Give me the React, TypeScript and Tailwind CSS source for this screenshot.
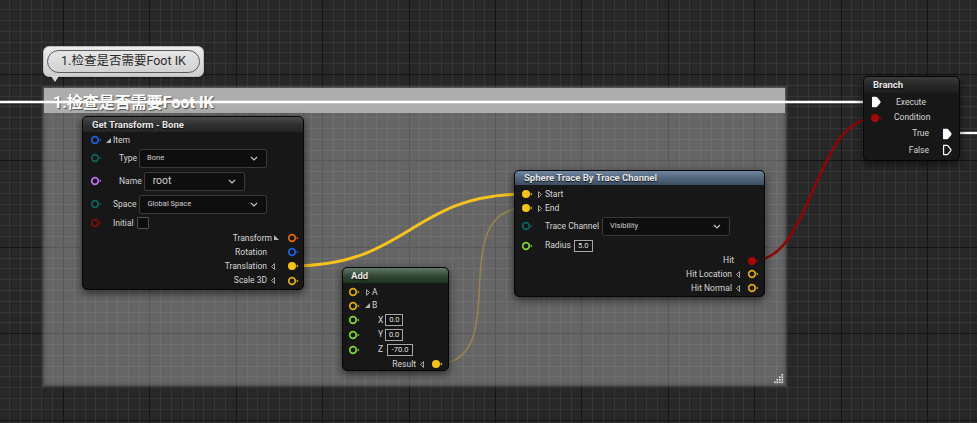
import React from "react";

type PinProps = { c: string; filled?: boolean };

function Pin({ c, filled = false }: PinProps) {
  return (
    <svg width="12" height="10" viewBox="0 0 12 10" className="shrink-0 block">
      {filled ? (
        <circle cx="5" cy="5" r="4" fill={c} />
      ) : (
        <circle cx="5" cy="5" r="3.3" fill="none" stroke={c} strokeWidth="1.7" />
      )}
      <path d="M9.7 3.4 L11.5 5 L9.7 6.6 Z" fill={c} />
    </svg>
  );
}

function Exec({ filled = false }: { filled?: boolean }) {
  return (
    <svg width="10" height="12" viewBox="0 0 10 12" className="shrink-0 block">
      <path
        d="M1.6 1.4 H4.9 Q5.5 1.4 5.9 1.9 L8.8 5.4 Q9.2 6 8.8 6.6 L5.9 10.1 Q5.5 10.6 4.9 10.6 H1.6 Z"
        fill={filled ? "#ffffff" : "none"}
        stroke="#ffffff"
        strokeWidth="1.2"
        strokeLinejoin="round"
      />
    </svg>
  );
}

function TriR() {
  return (
    <svg width="4" height="7" viewBox="0 0 4 7" className="shrink-0 block">
      <path d="M0.5 0.6 L3.5 3.5 L0.5 6.4 Z" fill="none" stroke="#b5b5b5" strokeWidth="0.9" />
    </svg>
  );
}

function TriL() {
  return (
    <svg width="4" height="7" viewBox="0 0 4 7" className="shrink-0 block">
      <path d="M3.5 0.6 L0.5 3.5 L3.5 6.4 Z" fill="none" stroke="#b5b5b5" strokeWidth="0.9" />
    </svg>
  );
}

function SplitTri() {
  return (
    <svg width="5" height="5" viewBox="0 0 5 5" className="shrink-0 block">
      <path d="M5 0 L5 5 L0 5 Z" fill="#b5b5b5" />
    </svg>
  );
}

function SplitTriL() {
  return (
    <svg width="5" height="5" viewBox="0 0 5 5" className="shrink-0 block">
      <path d="M0 0 L5 5 L0 5 Z" fill="#b5b5b5" />
    </svg>
  );
}

function Chevron() {
  return (
    <svg width="8" height="5" viewBox="0 0 8 5" className="shrink-0 block">
      <polyline points="1,1 4,4 7,1" fill="none" stroke="#c8c8c8" strokeWidth="1.1" />
    </svg>
  );
}

function Label({ children, cls = "" }: { children: React.ReactNode; cls?: string }) {
  return (
    <span className={`text-[8.5px] leading-none text-[#d6d6d6] whitespace-nowrap ${cls}`}>{children}</span>
  );
}

function Dropdown({ cls, text, textCls }: { cls: string; text: string; textCls: string }) {
  return (
    <div
      className={`h-[19px] flex items-center justify-between rounded-[2px] border border-[#3a3a3a] bg-[#0e0e0e] pr-[8px] ${cls}`}
    >
      <span className={`leading-none text-[#cfcfcf] whitespace-nowrap ${textCls}`}>{text}</span>
      <Chevron />
    </div>
  );
}

function ValueBox({ cls, text }: { cls: string; text: string }) {
  return (
    <div
      className={`h-[12px] flex items-center justify-center border border-[#a8a8a8] bg-[#121212] ${cls}`}
    >
      <span className="text-[7.5px] leading-none text-[#e0e0e0]">{text}</span>
    </div>
  );
}

function NodeBox({
  pos,
  header,
  title,
  children,
}: {
  pos: string;
  header: string;
  title: string;
  children: React.ReactNode;
}) {
  return (
    <div
      className={`absolute ${pos} flex flex-col rounded-[5px] border border-[#060606] bg-[#171717] shadow-[0_3px_8px_rgba(0,0,0,0.6)] overflow-hidden`}
    >
      <div className={`${header} flex items-center shrink-0 rounded-t-[4px]`}>
        <span className="text-[9.5px] font-bold leading-none text-[#e8e8e8] whitespace-nowrap [text-shadow:0_1px_1px_rgba(0,0,0,0.85)]">
          {title}
        </span>
      </div>
      {children}
    </div>
  );
}

function Grid() {
  const vs: { x: number; major: boolean }[] = [];
  for (let k = -5; 63 + k * 10.8 < 977; k++) {
    vs.push({ x: Math.round(63 + k * 10.8), major: ((k % 8) + 8) % 8 === 0 });
  }
  const hs: { y: number; major: boolean }[] = [];
  for (let k = -6; 74 + k * 10.8 < 423; k++) {
    hs.push({ y: Math.round(74 + k * 10.8), major: ((k % 8) + 8) % 8 === 0 });
  }
  return (
    <svg className="absolute inset-0 block" width="977" height="423" shapeRendering="crispEdges">
      <rect width="977" height="423" fill="#272727" />
      {vs.filter((v) => !v.major).map((v) => (
        <rect key={"v" + v.x} x={v.x} y={0} width={1} height={423} fill="#363636" />
      ))}
      {hs.filter((h) => !h.major).map((h) => (
        <rect key={"h" + h.y} x={0} y={h.y} width={977} height={1} fill="#363636" />
      ))}
      {vs.filter((v) => v.major).map((v) => (
        <rect key={"V" + v.x} x={v.x} y={0} width={1} height={423} fill="#151515" />
      ))}
      {hs.filter((h) => h.major).map((h) => (
        <rect key={"H" + h.y} x={0} y={h.y} width={977} height={1} fill="#151515" />
      ))}
    </svg>
  );
}

function Wires() {
  return (
    <svg className="absolute inset-0 block pointer-events-none" width="977" height="423">
      <path d="M0 102 H872" stroke="#ffffff" strokeWidth="2.3" fill="none" />
      <path d="M948 133 H977" stroke="#ffffff" strokeWidth="2.3" fill="none" />
      <path
        d="M292 266 C 410 266, 410 194, 526 194"
        stroke="#f6c31d"
        strokeWidth="3"
        fill="none"
      />
      <path
        d="M436 364 C 516 364, 442 208, 526 208"
        stroke="rgba(196,160,60,0.5)"
        strokeWidth="1.6"
        fill="none"
      />
      <path
        d="M752 261 C 813 261, 814 118, 875 118"
        stroke="#8e0606"
        strokeWidth="2.6"
        fill="none"
      />
    </svg>
  );
}

function Grip() {
  const dots: [number, number][] = [];
  for (let r = 0; r < 4; r++) {
    for (let c = 3 - r; c < 4; c++) {
      dots.push([c * 2.5, r * 2.5]);
    }
  }
  return (
    <svg width="10" height="10" viewBox="0 0 10 10" className="block">
      {dots.map(([x, y], i) => (
        <rect key={i} x={x} y={y} width="1.6" height="1.6" fill="#e6e6e6" />
      ))}
    </svg>
  );
}

export default function App() {
  const blue = "#2160d8";
  const teal = "#0c625e";
  const purple = "#c46cf0";
  const darkRed = "#860a0a";
  const orange = "#e3690e";
  const yellow = "#f6c31d";
  const yellowO = "#dcaa16";
  const green = "#82d234";
  const red = "#a80606";

  return (
    <div className="relative w-[977px] h-[423px] overflow-hidden bg-[#272727] font-[Roboto,'Noto_Sans_CJK_SC',sans-serif]">
      <Grid />

      {/* Comment box */}
      <div className="absolute left-[42px] top-[86px] w-[745px] h-[301px] flex flex-col bg-white/[0.29] border border-black/40 shadow-[inset_0_0_4px_rgba(0,0,0,0.45)]">
        <div className="mx-[1px] mt-[1px] h-[25px] shrink-0 bg-[#adadad] flex items-center pl-[9px] pt-[4px]">
          <span className="text-[16px] font-bold leading-none text-white whitespace-nowrap [text-shadow:1px_1px_1px_rgba(0,0,0,0.55)]">
            1.检查是否需要Foot IK
          </span>
        </div>
        <div className="flex-1 flex items-end justify-end pr-[2px] pb-[2px]">
          <Grip />
        </div>
      </div>

      {/* Comment bubble */}
      <div className="absolute left-[43px] top-[46px] w-[161px] h-[31px] rounded-[6px] bg-[linear-gradient(to_bottom,#ececec,#cfcfcf)] border border-[#bdbdbd] p-[3px] shadow-[0_1px_2px_rgba(0,0,0,0.4)]">
        <div className="w-full h-full rounded-full border border-[#5a5a5a] bg-[linear-gradient(to_bottom,#e6e6e6,#d2d2d2)] flex items-center justify-center">
          <span className="text-[12.5px] leading-none text-[#2b2b2b] whitespace-nowrap">1.检查是否需要Foot IK</span>
        </div>
      </div>
      <svg className="absolute left-[50px] top-[76px] block" width="10" height="7" viewBox="0 0 10 7">
        <path d="M1 0 L9 0 L5 6 Z" fill="#d8d8d8" />
      </svg>

      <Wires />

      {/* Get Transform - Bone */}
      <NodeBox
        pos="left-[82px] top-[116px] w-[222px]"
        header="h-[15px] pl-[9px] bg-[linear-gradient(to_bottom,#4a4a4a,#2e2e2e_55%,#242424)]"
        title="Get Transform - Bone"
      >
        <div className="flex flex-col pt-[1px] pb-[1px]">
          <div className="flex items-center h-[14px] pl-[7px]">
            <Pin c={blue} />
            <div className="ml-[4px]">
              <SplitTri />
            </div>
            <Label cls="ml-[2px]">Item</Label>
          </div>
          <div className="flex items-center h-[22px] pl-[7px]">
            <Pin c={teal} />
            <Label cls="ml-[17px]">Type</Label>
            <Dropdown cls="ml-[2px] w-[128px] pl-[7px]" text="Bone" textCls="text-[7.5px]" />
          </div>
          <div className="flex items-center h-[24px] pl-[7px]">
            <Pin c={purple} />
            <Label cls="ml-[17px]">Name</Label>
            <Dropdown cls="ml-[2px] w-[101px] pl-[8px]" text="root" textCls="text-[10.5px]" />
          </div>
          <div className="flex items-center h-[22px] pl-[7px]">
            <Pin c={teal} />
            <Label cls="ml-[11px]">Space</Label>
            <Dropdown cls="ml-[3px] w-[128px] pl-[7px]" text="Global Space" textCls="text-[7.5px]" />
          </div>
          <div className="flex items-center h-[16px] pl-[7px]">
            <Pin c={darkRed} />
            <Label cls="ml-[11px]">Initial</Label>
            <div className="ml-[3px] w-[12px] h-[12px] border border-[#4e4e4e] bg-[#0d0d0d] rounded-[1px]" />
          </div>
          <div className="flex items-center justify-end h-[14px] pr-[4px]">
            <Label>Transform</Label>
            <div className="ml-[2px] -mt-[1px]">
              <SplitTriL />
            </div>
            <div className="ml-[8px]">
              <Pin c={orange} />
            </div>
          </div>
          <div className="flex items-center justify-end h-[14px] pr-[4px]">
            <Label>Rotation</Label>
            <div className="ml-[20px]">
              <Pin c={blue} />
            </div>
          </div>
          <div className="flex items-center justify-end h-[14px] pr-[4px]">
            <Label>Translation</Label>
            <div className="ml-[4px]">
              <TriL />
            </div>
            <div className="ml-[12px]">
              <Pin c={yellow} filled />
            </div>
          </div>
          <div className="flex items-center justify-end h-[15px] pr-[4px]">
            <Label>Scale 3D</Label>
            <div className="ml-[4px]">
              <TriL />
            </div>
            <div className="ml-[12px]">
              <Pin c={yellowO} />
            </div>
          </div>
        </div>
      </NodeBox>

      {/* Add */}
      <NodeBox
        pos="left-[342px] top-[267px] w-[107px]"
        header="h-[15px] pl-[8px] bg-[linear-gradient(to_bottom,#63786a,#2f4631_55%,#1f321f)]"
        title="Add"
      >
        <div className="flex flex-col pt-[2px]">
          <div className="flex items-center h-[14px] pl-[5px]">
            <Pin c={yellowO} />
            <div className="ml-[6px]">
              <TriR />
            </div>
            <Label cls="ml-[2px]">A</Label>
          </div>
          <div className="flex items-center h-[13px] pl-[5px]">
            <Pin c={yellowO} />
            <div className="ml-[5px]">
              <SplitTri />
            </div>
            <Label cls="ml-[2px]">B</Label>
          </div>
          <div className="flex items-center h-[16px] pl-[5px]">
            <Pin c={green} />
            <Label cls="ml-[18px]">X</Label>
            <ValueBox cls="ml-[2px] w-[18px]" text="0.0" />
          </div>
          <div className="flex items-center h-[13px] pl-[5px]">
            <Pin c={green} />
            <Label cls="ml-[18px]">Y</Label>
            <ValueBox cls="ml-[2px] w-[18px]" text="0.0" />
          </div>
          <div className="flex items-center h-[17px] pl-[5px]">
            <Pin c={green} />
            <Label cls="ml-[18px]">Z</Label>
            <ValueBox cls="ml-[4px] w-[26px]" text="-70.0" />
          </div>
          <div className="flex items-center justify-end h-[12px] pr-[5px]">
            <Label>Result</Label>
            <div className="ml-[4px]">
              <TriL />
            </div>
            <div className="ml-[7px]">
              <Pin c={yellow} filled />
            </div>
          </div>
        </div>
      </NodeBox>

      {/* Sphere Trace By Trace Channel */}
      <NodeBox
        pos="left-[514px] top-[170px] w-[251px]"
        header="h-[14px] pl-[9px] bg-[linear-gradient(to_bottom,#70869f,#4f6379_55%,#3d4e62)]"
        title="Sphere Trace By Trace Channel"
      >
        <div className="flex flex-col pt-[2px] pb-[1px]">
          <div className="flex items-center h-[14px] pl-[6px]">
            <Pin c={yellow} filled />
            <div className="ml-[5px]">
              <TriR />
            </div>
            <Label cls="ml-[3px]">Start</Label>
          </div>
          <div className="flex items-center h-[14px] pl-[6px]">
            <Pin c={yellow} filled />
            <div className="ml-[5px]">
              <TriR />
            </div>
            <Label cls="ml-[3px]">End</Label>
          </div>
          <div className="flex items-center h-[22px] pl-[6px]">
            <Pin c={teal} />
            <Label cls="ml-[12px]">Trace Channel</Label>
            <Dropdown cls="ml-[3px] w-[128px] pl-[7px]" text="Visibility" textCls="text-[7.5px]" />
          </div>
          <div className="flex items-center h-[17px] pl-[6px]">
            <Pin c={green} />
            <Label cls="ml-[12px]">Radius</Label>
            <ValueBox cls="ml-[3px] w-[19px]" text="5.0" />
          </div>
          <div className="flex items-center justify-end h-[13px] pr-[5px]">
            <Label>Hit</Label>
            <div className="ml-[13px]">
              <Pin c={red} filled />
            </div>
          </div>
          <div className="flex items-center justify-end h-[14px] pr-[5px]">
            <Label>Hit Location</Label>
            <div className="ml-[4px]">
              <TriL />
            </div>
            <div className="ml-[7px]">
              <Pin c={yellowO} />
            </div>
          </div>
          <div className="flex items-center justify-end h-[14px] pr-[5px]">
            <Label>Hit Normal</Label>
            <div className="ml-[4px]">
              <TriL />
            </div>
            <div className="ml-[7px]">
              <Pin c={yellowO} />
            </div>
          </div>
        </div>
      </NodeBox>

      {/* Branch */}
      <NodeBox
        pos="left-[863px] top-[76px] w-[97px]"
        header="h-[16px] pl-[9px] bg-[linear-gradient(to_bottom,#3a3a3a,#262626_55%,#1e1e1e)]"
        title="Branch"
      >
        <div className="flex flex-col pt-[2px] pb-[1px]">
          <div className="flex items-center h-[14px] pl-[7px]">
            <Exec filled />
            <Label cls="ml-[15px]">Execute</Label>
          </div>
          <div className="flex items-center h-[17px] pl-[6px]">
            <Pin c={red} filled />
            <Label cls="ml-[12px]">Condition</Label>
          </div>
          <div className="flex items-center justify-end h-[15px] pr-[7px]">
            <Label>True</Label>
            <div className="ml-[13px]">
              <Exec filled />
            </div>
          </div>
          <div className="flex items-center justify-end h-[18px] pr-[7px]">
            <Label>False</Label>
            <div className="ml-[13px]">
              <Exec />
            </div>
          </div>
        </div>
      </NodeBox>
    </div>
  );
}
